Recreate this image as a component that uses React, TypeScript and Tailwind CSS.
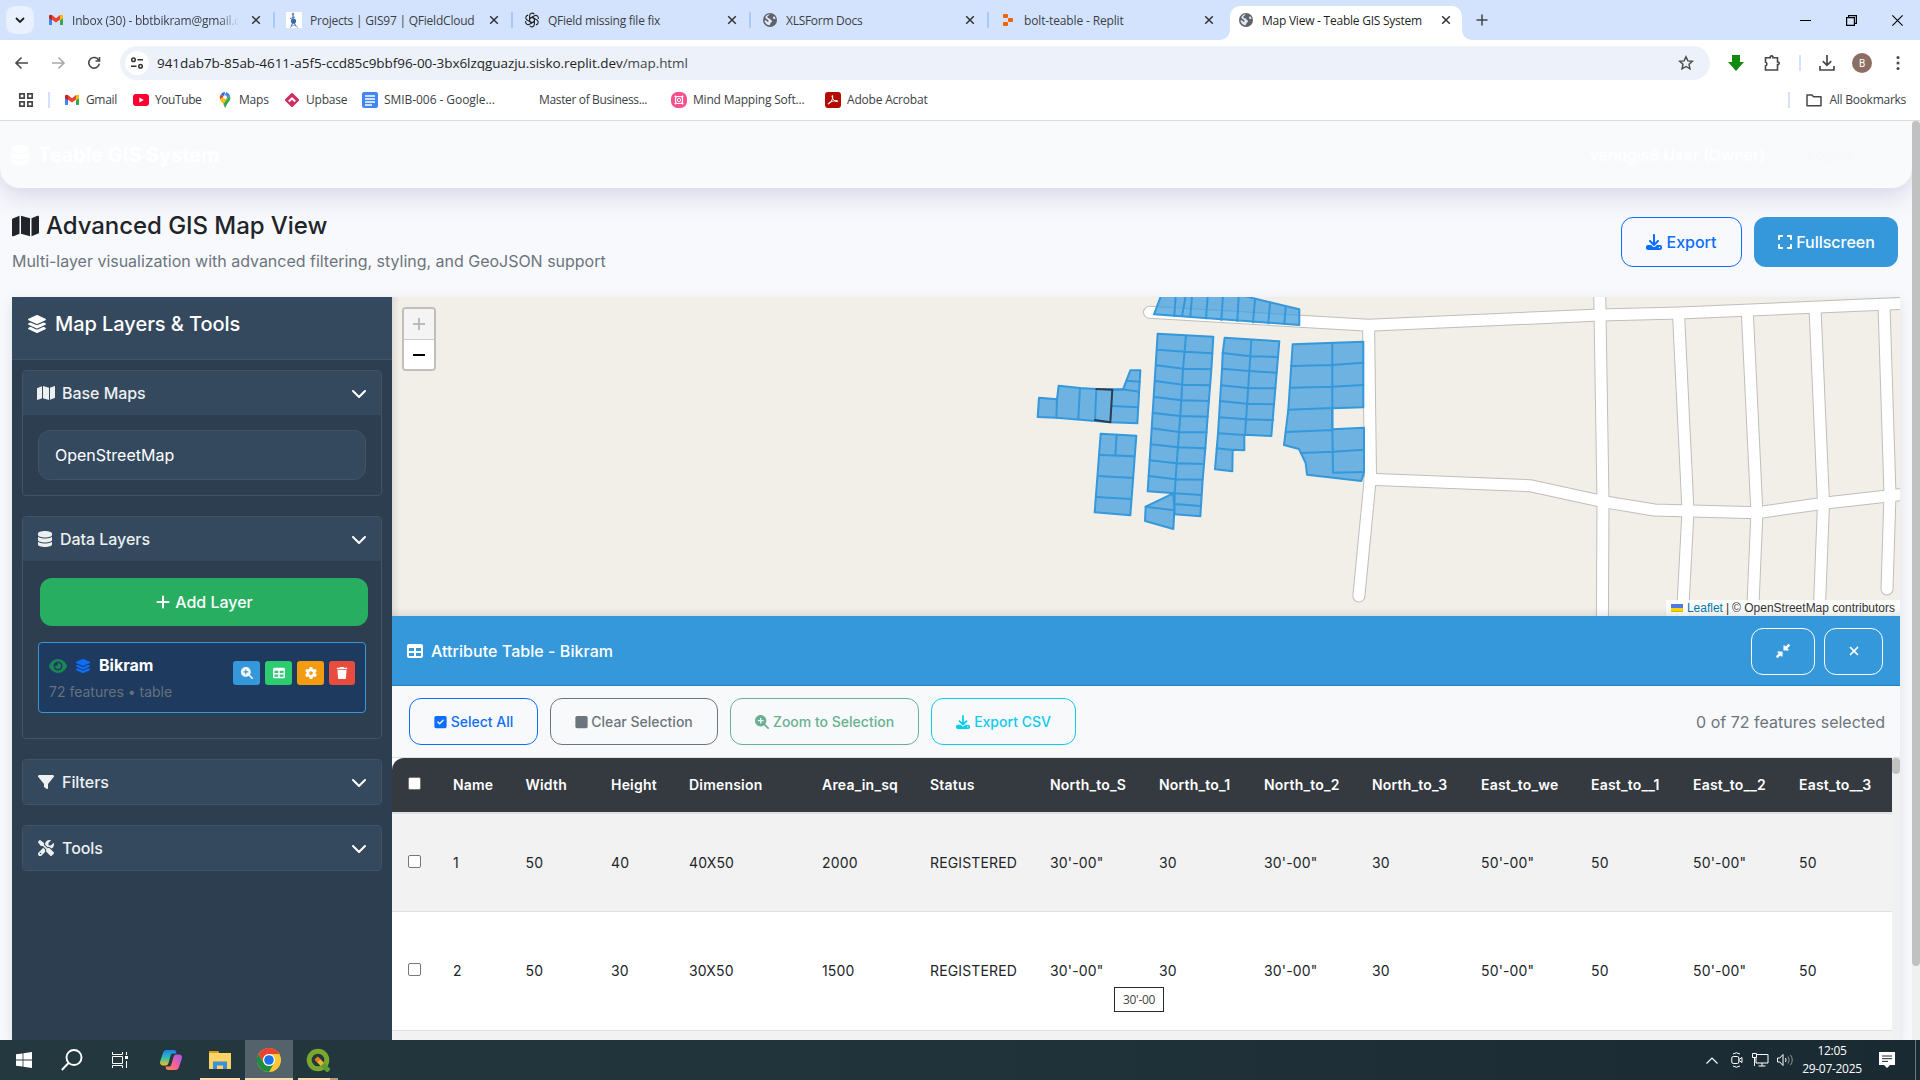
import type { ReactNode } from "react";
import {
  FaDatabase, FaMap, FaDownload, FaExpand, FaLayerGroup, FaChevronDown, FaPlus, FaEye, FaMagnifyingGlassPlus,
  FaTable, FaGear, FaTrash, FaFilter, FaScrewdriverWrench, FaSquareCheck, FaSquare, FaXmark,
  FaDownLeftAndUpRightToCenter,
} from "react-icons/fa6";

const ui = "font-['Open_Sans','Noto_Sans',sans-serif]";

/* ---------- small brand icons ---------- */
const Gmail = () => (
  <svg viewBox="0 0 16 16" className="size-4 shrink-0">
    <path d="M1 4v9h3V6z" fill="#4285f4" /><path d="M15 4v9h-3V6z" fill="#34a853" />
    <path d="M1 3.5 4 3l4 3.2L12 3l3 .5v2L8 10.5 1 5.500z" fill="#ea4335" />
    <path d="M12 3.200 14 2.700 15 4v2.200l-3 2.300z" fill="#fbbc04" /><path d="M4 3.200 2 2.700 1 4v2.200l3 2.300z" fill="#c5221f" />
  </svg>
);
const Field = () => (
  <svg viewBox="0 0 16 16" className="size-4 shrink-0">
    <path fill="#fff" d="M0 0h16v16H0z" /><circle cx="7" cy="2" r="1.300" fill="#7d8fa8" />
    <path d="M7 3v5M4 6.500 9 5M5 14l2-3M10 14 8 11" stroke="#5f83b5" strokeWidth="1.300" />
    <circle cx="7.500" cy="9" r="2.600" fill="#3469b0" /><path d="M4 15.500 8 13l4 2.500" stroke="#88a5cc" fill="none" />
  </svg>
);
const OpenAI = () => (
  <svg viewBox="0 0 16 16" className="size-4 shrink-0" fill="none" stroke="#222" strokeWidth="1.100">
    {[0, 60, 120, 180, 240, 300].map((a) => (
      <path key={a} transform={`rotate(${a} 8 8)`} d="M8 5.200 5.600 6.600V3.700a2.600 2.600 0 0 1 4.700-1.500M8 5.200l3 1.700" />
    ))}
  </svg>
);
const Globe = () => (
  <svg viewBox="0 0 16 16" className="size-4 shrink-0">
    <circle cx="8" cy="8" r="7" fill="#5f6368" />
    <path d="M8.500 2.200c-2 .3-1.500 1.600-3 2-.6 1.400.4 2 2 2.200 1.300.2.700 1.700 1.800 1.800 1.500.200.600 2-.6 2.500-.6.900-.4 2-1.200 2.600C4.500 13 2.600 10.700 2.500 8.300c1 .1 2 .2 2.600 1.200.5.700 1.400.4 1.500-.5C6.700 7.300 3.900 7.600 3.300 5.300 4.300 3.200 6.300 2 8.500 2.200zM12 4l1.700 2.500-1.700.8-1.200-1.500z" fill="#dfe9fb" />
  </svg>
);
const Replit = () => (
  <svg viewBox="0 0 16 16" className="size-4 shrink-0" fill="#f26207">
    <rect x="3" y="2" width="5" height="4" rx="1" /><rect x="8" y="6" width="5" height="4" rx="1" /><rect x="3" y="10" width="5" height="4" rx="1" />
  </svg>
);
const CloseX = () => (
  <svg viewBox="0 0 10 10" className="size-[10px] shrink-0" stroke="#333" strokeWidth="1.500"><path d="M1.200 1.200l7.600 7.600M8.800 1.200 1.200 8.800" /></svg>
);

/* ---------- browser chrome ---------- */
const tabs: { icon: ReactNode; title: string; cls: string }[] = [
  { icon: <Gmail />, title: "Inbox (30) - bbtbikram@gmail.c", cls: "tracking-[-0.2px] [mask-image:linear-gradient(90deg,#000_88%,transparent)]" },
  { icon: <Field />, title: "Projects | GIS97 | QFieldCloud", cls: "tracking-[-0.22px]" },
  { icon: <OpenAI />, title: "QField missing file fix", cls: "tracking-[-0.24px]" },
  { icon: <Globe />, title: "XLSForm Docs", cls: "tracking-[-0.28px]" },
  { icon: <Replit />, title: "bolt-teable - Replit", cls: "tracking-[-0.14px]" },
];

function TabStrip() {
  return (
    <div className="flex h-10 w-full bg-[#d3e3fd]">
      <div className="flex h-10 w-[37px] shrink-0 items-center pl-[6px]">
        <div className="flex h-7 w-7 items-center justify-center rounded-[9px] bg-[#e9f1fe]">
          <svg viewBox="0 0 10 10" className="size-[10px]" fill="none" stroke="#1f1f1f" strokeWidth="1.800"><path d="M1 3l4 4 4-4" /></svg>
        </div>
      </div>
      {tabs.map((t, i) => (
        <div key={t.title} className="flex h-10 w-[238px] shrink-0 items-center pl-[11px]">
          {t.icon}
          <span className={`mt-px ml-2 w-[168px] overflow-hidden text-[12px] whitespace-nowrap text-[#3b3f45] ${ui} ${t.cls}`}>{t.title}</span>
          <span className="ml-3 flex"><CloseX /></span>
          {i < 4 && <span className="ml-3 h-4 w-[2px] rounded bg-[#a8c7fa]" />}
        </div>
      ))}
      <div className="flex h-10 shrink-0 items-end">
        <svg viewBox="0 0 10 10" className="-ml-[7px] size-[10px]"><path d="M10 0v10H0A10 10 0 0 0 10 0z" fill="#fff" /></svg>
        <div className="flex h-[34px] w-[232px] items-center rounded-t-[10px] bg-white pb-[6px] pl-[8px]">
          <Globe />
          <span className={`mt-px ml-2 w-[168px] text-[12px] tracking-[-0.24px] whitespace-nowrap text-[#1f1f1f] ${ui}`}>Map View - Teable GIS System</span>
          <span className="ml-[11px] flex"><CloseX /></span>
        </div>
        <svg viewBox="0 0 10 10" className="size-[10px]"><path d="M0 0v10h10A10 10 0 0 1 0 0z" fill="#fff" /></svg>
      </div>
      <div className="flex h-10 flex-1 items-center justify-between pr-[17px] pl-[4px]">
        <svg viewBox="0 0 12 12" className="size-3" stroke="#444" strokeWidth="1.500"><path d="M6 .5v11M.5 6h11" /></svg>
        <div className="flex items-center gap-[35px]">
          <svg viewBox="0 0 11 11" className="size-[11px]" stroke="#000"><path d="M0 5.500h11" /></svg>
          <svg viewBox="0 0 11 11" className="size-[11px]" stroke="#000" strokeWidth="1.200" fill="none"><path d="M.6 2.600h7.800v7.800H.6zM2.600 2.600V.6h7.800v7.800h-2" /></svg>
          <svg viewBox="0 0 11 11" className="size-[11px]" stroke="#000" strokeWidth="1.100"><path d="M.4.4l10.200 10.200M10.600.4.4 10.600" /></svg>
        </div>
      </div>
    </div>
  );
}

function Toolbar() {
  return (
    <div className="flex h-[46px] w-full items-center bg-white">
      <div className="flex w-[120px] shrink-0 items-center gap-[20px] pl-[14px]">
        <svg viewBox="0 0 16 16" className="size-4" fill="none" stroke="#474747" strokeWidth="1.600"><path d="M14 8H2.500M7.500 2.500 2 8l5.500 5.500" /></svg>
        <svg viewBox="0 0 16 16" className="size-4" fill="none" stroke="#a9a9a9" strokeWidth="1.600"><path d="M2 8h11.500M8.500 2.500 14 8l-5.500 5.500" /></svg>
        <svg viewBox="0 0 16 16" className="size-4" fill="none" stroke="#474747" strokeWidth="1.600"><path d="M12.800 5.400A5.300 5.300 0 1 0 13.300 8.600" /><path d="M13.500 2v4H9.500" /></svg>
      </div>
      <div className="flex h-[34px] w-[1590px] shrink-0 items-center rounded-full bg-[#ecf1fa] pr-4 pl-[5px]">
        <div className="flex size-6 items-center justify-center rounded-full bg-white">
          <svg viewBox="0 0 14 14" className="size-[14px]" fill="none" stroke="#333" strokeWidth="1.500"><circle cx="3.500" cy="3.800" r="1.800" /><path d="M7.500 3.800H13M1 10.200h5.500" /><circle cx="10.500" cy="10.200" r="1.800" /></svg>
        </div>
        <span className={`ml-2 flex-1 text-[13.5px] tracking-[-0.05px] whitespace-nowrap text-[#1f1f1f] ${ui}`}>
          941dab7b-85ab-4611-a5f5-ccd85c9bbf96-00-3bx6lzqguazju.sisko.replit.dev<span className="text-[#474747]">/map.html</span>
        </span>
        <svg viewBox="0 0 16 16" className="size-4" fill="none" stroke="#474747" strokeWidth="1.400"><path d="M8 1.700l1.900 4.200 4.500.4-3.400 3 1 4.500L8 11.500l-4 2.300 1-4.500-3.400-3 4.500-.4z" /></svg>
      </div>
      <div className="flex flex-1 items-center pl-[17px]">
        <svg viewBox="0 0 18 18" className="size-[18px]"><path d="M5 1h8v7h4l-8 9-8-9h4z" fill="#0f8a0f" /></svg>
        <svg viewBox="0 0 18 18" className="ml-[18px] size-[18px]" fill="none" stroke="#474747" strokeWidth="1.600"><path d="M2.500 3.800H7.300V2.600a1.500 1.500 0 0 1 2.600 0V3.800h4.600V8h.8a1.400 1.400 0 0 1 0 2.600h-.8V16h-12v-4.200a2 2 0 0 0 0-3.800z" /></svg>
        <span className="ml-[18px] h-4 w-[2px] bg-[#d3e3fd]" />
        <svg viewBox="0 0 16 16" className="ml-[18px] size-4" fill="none" stroke="#474747" strokeWidth="1.700"><path d="M8 0v10M3.800 6.200 8 10.400l4.200-4.200M1 11v4h14v-4" /></svg>
        <span className="ml-[17px] flex size-5 items-center justify-center rounded-full bg-[#8d6e63] font-['Roboto',sans-serif] text-[10px] text-white">B</span>
        <svg viewBox="0 0 4 16" className="ml-[24px] h-4 w-1" fill="#474747"><circle cx="2" cy="2.500" r="1.500" /><circle cx="2" cy="8" r="1.500" /><circle cx="2" cy="13.500" r="1.500" /></svg>
      </div>
    </div>
  );
}

function Bookmark({ icon, label, w, t = "tracking-[-0.2px]" }: { icon: ReactNode; label: string; w: string; t?: string }) {
  return (
    <div className={`flex shrink-0 items-center ${w}`}>
      <span className="flex size-4 shrink-0 items-center">{icon}</span>
      <span className={`ml-[6px] text-[12px] whitespace-nowrap text-[#3b3f45] ${t} ${ui}`}>{label}</span>
    </div>
  );
}

function Bookmarks() {
  return (
    <div className="flex h-[35px] w-full items-start border-b border-[#dcdcdc] bg-white">
      <div className="flex h-7 w-full items-center pl-[18px]">
        <svg viewBox="0 0 16 16" className="size-4 shrink-0" fill="none" stroke="#474747" strokeWidth="1.700"><path d="M1.800 1.800h4.400v4.400H1.800zM9.800 1.800h4.400v4.400H9.800zM1.800 9.800h4.400v4.400H1.800zM9.800 9.800h4.400v4.400H9.800z" /></svg>
        <span className="mr-[14px] ml-[14px] h-4 w-[2px] bg-[#d3e3fd]" />
        <Bookmark w="w-[69px]" t="tracking-[-0.35px]" label="Gmail" icon={<Gmail />} />
        <Bookmark w="w-[84px]" t="tracking-[-0.42px]" label="YouTube" icon={<svg viewBox="0 0 16 16"><rect y="2" width="16" height="12" rx="3" fill="#f03" /><path d="M6.300 5.500v5L10.800 8z" fill="#fff" /></svg>} />
        <Bookmark w="w-[67px]" label="Maps" icon={
          <svg viewBox="0 0 16 16"><path d="M8 0a5.300 5.300 0 0 0-4 2l3 3z" fill="#1a73e8" /><path d="M4 2a5.500 5.500 0 0 0-.8 5.500L7 4.800z" fill="#ea4335" /><path d="M3.200 7.500C3.700 9 5.200 10.600 6.300 12l5.500-6.700-1.600-2.700z" fill="#fbbc04" /><path d="M12.900 3.500c1 2.300.4 4.200-.9 6-1.600 2-2.700 3.200-3.300 6h-1c-.3-1.500-.8-2.600-1.400-3.500z" fill="#34a853" /><path d="M8 0c2.200 0 4 1.200 4.900 3.500L9.600 7 6.800 4.800 9.200.2z" fill="#4285f4" /><circle cx="8" cy="5.200" r="1.900" fill="#fff" /></svg>} />
        <Bookmark w="w-[78px]" label="Upbase" icon={<svg viewBox="0 0 16 16"><rect x="2.600" y="2.600" width="10.800" height="10.800" rx="1.500" transform="rotate(45 8 8)" fill="#cf2e63" /><path d="M4.800 9.500 8 6.300l3.200 3.200" fill="none" stroke="#fff" strokeWidth="1.900" /></svg>} />
        <Bookmark w="w-[155px]" t="tracking-[-0.06px]" label="SMIB-006 - Google..." icon={<svg viewBox="0 0 16 16"><rect width="16" height="16" rx="2" fill="#4285f4" /><path d="M3 4h10M3 7h10M3 10h10M3 13h7" stroke="#fff" strokeWidth="1.500" /></svg>} />
        <Bookmark w="w-[154px]" t="tracking-[-0.35px]" label="Master of Business..." icon={null} />
        <Bookmark w="w-[154px]" label="Mind Mapping Soft..." icon={<svg viewBox="0 0 16 16"><rect width="16" height="16" rx="6.500" fill="#f64f8b" /><rect x="4.500" y="4.500" width="7" height="7" rx="2" fill="none" stroke="#fff" strokeWidth="1.200" /><circle cx="8" cy="8" r="1.700" fill="none" stroke="#fff" /><path d="M3.800 3.800l1.500 1.500M12.200 3.800l-1.500 1.500M3.800 12.200l1.500-1.500M12.200 12.200l-1.500-1.500" stroke="#fff" strokeWidth="1.600" /></svg>} />
        <Bookmark w="w-[120px]" label="Adobe Acrobat" icon={<svg viewBox="0 0 16 16"><rect width="16" height="16" rx="3" fill="#b30b00" /><path d="M3.500 12c2-1 4.500-4.500 4.300-8 0-.8-1-.8-.8.4.5 2.600 2.500 5.400 5.300 5.300.8-.1.800-1-.3-1.100-2.500-.1-6 .9-8.500 2.600-.6.500-.4 1.300 0 .8z" fill="none" stroke="#fff" /></svg>} />
        <div className="ml-auto flex items-center pr-[14px]">
          <span className="h-4 w-[2px] bg-[#d3e3fd]" />
          <svg viewBox="0 0 16 16" className="ml-4 size-4" fill="none" stroke="#474747" strokeWidth="1.500"><path d="M1 3h5l1.500 1.700H15v9H1z" strokeLinejoin="round" /></svg>
          <span className={`ml-2 text-[12px] tracking-[-0.27px] whitespace-nowrap text-[#3b3f45] ${ui}`}>All Bookmarks</span>
        </div>
      </div>
    </div>
  );
}

/* ---------- map ---------- */
const roads = [
  "M1368.600 326L1370.500 476L1358.900 596",
  "M1599.800 285V300L1603 500L1602.300 640",
  "M1678.500 314L1688 511L1683.300 600L1683 640",
  "M1747.300 312L1756.900 512.700L1753.200 600L1752 640",
  "M1815 308L1823.500 503.300L1819.400 608",
  "M1884 305L1890 494.700L1887 589",
  "M1149.500 312.300L1368.500 325.300L1599.700 315L1680 313L1910 303",
  "M1370 479.300L1529.800 485.700L1603.400 501.700L1654.400 510L1756.900 512.700L1823.500 503.300L1910 493.500",
];
const parcels = [
  "425,12 402,73 838,105 838,58 700,25 640,8",
  "413,131 580,140 574,240 563,380 556,475 548,570 541,679 463,673 464,610 383,604 386,558",
  "460,610 377,650 375,693 460,717 463,661",
  "614,143 778,154 754,438 673,434 673,481 638,479 637,544 585,538 594,430 606,237 608,190",
  "818,163 1030,155 1030,352 937,355 937,418 1032,413 1032,546 1024,573 861,554 857,519 837,477 792,465 805,358",
  "57,323 111,328 116,287 180,294 229,297 309,298 331,241 361,241 352,400 271,397 109,383 53,381",
  "242,431 349,437 331,676 224,667",
];
const parcelLines =
  "M467 18L463 78M497 18L486 78M516 18L511 80M563 18L558 85M609 18L604 90M656 18L652 93M705 28L699 97M750 38L745 100M797 52L793 102" +
  "M498 137L489 237L484 330L474 470L470 520L464 610" +
  "M411 179L495 185L577 190M408 226L490 236L573 238M406 273L488 284L569 286M403 321L485 331L566 333M399 369L480 378L563 380M396 415L477 426L560 427M392 463L475 472L556 475M389 511L470 520L551 522M386 558L467 568L547 569M464 610L544 615M464 642L542 648M377 650L462 661M462 610V661" +
  "M694 150L688 243L675 435M608 189L692 199L771 201M606 236L688 243L769 248M603 286L684 294L766 295M600 333L682 341L762 343M598 382L678 388L760 390M594 430L675 435M590 475L638 480" +
  "M937 159L937 355M937 418L939 548L1032 546M813 228L936 225L1030 218M811 293L936 290L1030 285M805 359L937 354M798 426L937 420M843 489L937 485L1032 479M937 355V418" +
  "M111 328L109 383M180 294L175 386M229 297L225 390M309 298L357 305M277 299L309 299M275 348L354 352M320 272L359 275" +
  "M240 495L342 499M236 558L339 564M230 621L334 627M290 434L286 495";

function MapView() {
  return (
    <div className="relative h-[319px] w-full shrink-0 overflow-hidden bg-[#f2efe9]">
      <svg viewBox="392 297 1508 319" className="block h-[319px] w-full" fill="none" strokeLinejoin="round" strokeLinecap="round">
        <g stroke="#c0bebb" strokeWidth="13">{roads.map((d) => <path key={d} d={d} />)}</g>
        <g stroke="#fff" strokeWidth="11">{roads.map((d) => <path key={d} d={d} />)}</g>
        <g transform="translate(1020 290) scale(.33333)" stroke="#3498db" strokeWidth="6">
          {parcels.map((p) => <polygon key={p} points={p} fill="#3498db" fillOpacity="0.7" />)}
          <path d={parcelLines} />
          <path d="M229 297L277 299L271 397L225 390" stroke="#2c3e50" />
        </g>
      </svg>
      <div className="absolute top-[10px] left-[10px] flex w-[34px] flex-col rounded-[4px] border-2 border-black/20 bg-clip-padding">
        <div className="flex h-[31px] items-center justify-center rounded-t-[2px] border-b border-[#ccc] bg-[#f4f4f4]"><svg viewBox="0 0 14 14" className="size-[14px]" stroke="#bbb" strokeWidth="2"><path d="M7 1v12M1 7h12" /></svg></div>
        <div className="flex h-[29px] items-center justify-center rounded-b-[2px] bg-white"><svg viewBox="0 0 14 14" className="size-[14px]" stroke="#000" strokeWidth="2"><path d="M1 7h12" /></svg></div>
      </div>
      <div className="absolute right-0 bottom-0 flex h-4 items-center bg-white/80 pr-[5px] pl-[5px] font-['Liberation_Sans',Arial,sans-serif] text-[12px] whitespace-nowrap text-[#333]">
        <svg viewBox="0 0 12 8" className="mr-1 h-2 w-3"><path fill="#4c7be1" d="M0 0h12v4H0z" /><path fill="#ffd500" d="M0 4h12v3H0z" /><path fill="#e0bc00" d="M0 7h12v1H0z" /></svg>
        <span className="text-[#0078a8]">Leaflet</span><span className="mx-[3px]">|</span><span>© OpenStreetMap contributors</span>
      </div>
      <div className="absolute inset-x-0 bottom-0 h-2 bg-linear-to-t from-black/8 to-transparent" />
      <div className="absolute inset-y-0 left-0 w-2 bg-linear-to-r from-black/8 to-transparent" />
    </div>
  );
}

/* ---------- sidebar ---------- */
function SectionHead({ icon, title }: { icon: ReactNode; title: string }) {
  return (
    <div className="flex h-[44px] shrink-0 items-center rounded-t-[3px] bg-[#34495e] pr-[14px] pl-[14px] text-base text-[#ecf0f1]">
      {icon}
      <span className="flex-1 pl-[7px] font-medium tracking-[-0.05px]">{title}</span>
      <FaChevronDown className="size-4 text-white" />
    </div>
  );
}

const section = "rounded-[4px] border border-[#415466]";

function Sidebar() {
  return (
    <aside className="flex w-[380px] shrink-0 flex-col bg-[#2c3e50] text-white">
      <div className="flex h-[63px] shrink-0 items-start border-b border-[#415466] bg-[#34495e] px-[15px] pt-3">
        <FaLayerGroup className="mt-[5px] size-5" />
        <h2 className="pl-2 text-[20px] leading-[30px] font-medium tracking-[-0.05px]">Map Layers &amp; Tools</h2>
      </div>
      <div className="flex flex-col px-[10px] pt-[10px]">
        <section className={`mb-[20px] h-[126px] ${section}`}>
          <SectionHead icon={<FaMap className="h-4 w-[18px]" />} title="Base Maps" />
          <div className="px-[15px] pt-[15px]">
            <div className="flex h-[50px] items-center rounded-[12px] border border-[#415466] bg-[#34495e] px-4 text-base">OpenStreetMap</div>
          </div>
        </section>
        <section className={`mb-[20px] h-[223px] ${section}`}>
          <SectionHead icon={<FaDatabase className="size-4" />} title="Data Layers" />
          <div className="px-[15px] pt-[17px]">
            <div className="ml-[2px] flex h-[48px] w-[328px] items-center justify-center rounded-[12px] bg-[#27ae60] text-base font-medium">
              <FaPlus className="mr-1 size-4" />Add Layer
            </div>
            <div className="mt-4 flex h-[71px] w-[328px] items-start rounded-[4px] border border-[#3498db] bg-[#1e3a5f] px-[10px] pt-[9px]">
              <div className="flex-1">
                <div className="flex items-center text-base leading-[27px] font-bold">
                  <FaEye className="h-4 w-[18px] text-[#198754]" />
                  <FaLayerGroup className="mr-2 ml-2 size-4 text-[#0d6efd]" />Bikram
                </div>
                <div className="-mt-px text-[14px] leading-[27px] text-[#66717c]">72 features • table</div>
              </div>
              <div className="flex gap-[5px] pt-[9px]">
                <span className="flex h-6 w-[27px] items-center justify-center rounded-[3px] bg-[#3498db]"><FaMagnifyingGlassPlus className="size-3" /></span>
                <span className="flex h-6 w-[27px] items-center justify-center rounded-[3px] bg-[#2ecc71]"><FaTable className="size-3" /></span>
                <span className="flex h-6 w-[27px] items-center justify-center rounded-[3px] bg-[#f39c12]"><FaGear className="size-3" /></span>
                <span className="flex h-6 w-[26px] items-center justify-center rounded-[3px] bg-[#e74c3c]"><FaTrash className="size-3" /></span>
              </div>
            </div>
          </div>
        </section>
        <section className={`mb-[20px] h-[46px] ${section}`}>
          <SectionHead icon={<FaFilter className="h-4 w-[18px]" />} title="Filters" />
        </section>
        <section className={`h-[46px] ${section}`}>
          <SectionHead icon={<FaScrewdriverWrench className="h-4 w-[18px]" />} title="Tools" />
        </section>
      </div>
    </aside>
  );
}

/* ---------- attribute table ---------- */
const grid =
  "grid grid-cols-[61px_72.5px_85.5px_78px_133px_108px_120px_109px_105px_108px_109px_110px_102px_106px_93px] items-center";
const heads = ["Name", "Width", "Height", "Dimension", "Area_in_sq", "Status", "North_to_S", "North_to_1", "North_to_2", "North_to_3", "East_to_we", "East_to__1", "East_to__2", "East_to__3"];
const rows = [
  ["1", "50", "40", "40X50", "2000", "REGISTERED", "30'-00\"", "30", "30'-00\"", "30", "50'-00\"", "50", "50'-00\"", "50"],
  ["2", "50", "30", "30X50", "1500", "REGISTERED", "30'-00\"", "30", "30'-00\"", "30", "50'-00\"", "50", "50'-00\"", "50"],
];
const Check = ({ cls }: { cls: string }) => <span className={`ml-4 size-[13px] rounded-[2px] border border-[#767676] bg-white ${cls}`} />;

function AttributeTable() {
  return (
    <div className="flex flex-1 flex-col overflow-hidden bg-[#f1f1f1]">
      <div className="flex h-[70px] shrink-0 items-center border-b border-[#2980b9] bg-[#3498db] pt-px pr-[17px] pl-[15px] text-white">
        <FaTable className="size-4" />
        <span className="flex-1 pl-2 text-base font-medium tracking-[0.05px]">Attribute Table - Bikram</span>
        <span className="mr-[9px] flex h-[47px] w-16 items-center justify-center rounded-[12px] border border-white"><FaDownLeftAndUpRightToCenter className="size-[14px]" /></span>
        <span className="flex h-[47px] w-[59px] items-center justify-center rounded-[12px] border border-white"><FaXmark className="size-[14px]" /></span>
      </div>
      <div className="flex h-[72px] shrink-0 items-center border-b border-[#dee2e6] bg-[#f8f9fa] pr-[15px] pl-[17px] text-[14px] font-medium">
        <span className="mr-3 flex h-[47px] w-[129px] items-center justify-center rounded-[12px] border border-[#0d6efd] text-[#0d6efd]"><FaSquareCheck className="mr-1 h-[14px] w-[13px]" />Select All</span>
        <span className="mr-3 flex h-[47px] w-[168px] items-center justify-center rounded-[12px] border border-[#6c757d] text-[#6c757d]"><FaSquare className="mr-[3px] h-[14px] w-[13px]" />Clear Selection</span>
        <span className="mr-3 flex h-[47px] w-[189px] items-center justify-center rounded-[12px] border border-[#68b18f] text-[#68b18f]"><FaMagnifyingGlassPlus className="mr-1 size-[14px]" />Zoom to Selection</span>
        <span className="flex h-[47px] w-[145px] items-center justify-center rounded-[12px] border border-[#0dcaf0] text-[#0dcaf0]"><FaDownload className="mr-1 size-[14px]" />Export CSV</span>
        <span className="ml-auto text-base font-normal text-[#6c757d]">0 of 72 features selected</span>
      </div>
      <div className="flex flex-1">
        <div className="w-[1500px] shrink-0 overflow-hidden bg-white">
          <div className={`h-[54px] w-[1500px] overflow-hidden rounded-tl-[12px] bg-[#343a40] pb-px text-[14px] font-semibold tracking-[0.2px] text-white ${grid}`}>
            <Check cls="-mt-[2px]" />
            {heads.map((h) => <span key={h} className="whitespace-nowrap">{h}</span>)}
          </div>
          <div className={`h-[100px] border-t-2 border-b border-[#dee2e6] bg-[#f2f2f2] text-[14px] text-[#212529] ${grid}`}>
            <Check cls="-mt-[3px]" />
            {rows[0].map((c, i) => <span key={i} className="tracking-[0.15px]">{c}</span>)}
          </div>
          <div className={`h-[119px] border-b border-[#dee2e6] bg-white pb-px text-[14px] text-[#212529] ${grid}`}>
            <Check cls="-mt-[2px]" />
            {rows[1].map((c, i) => <span key={i} className="tracking-[0.15px]">{c}</span>)}
          </div>
          <div className="h-4 bg-[#f2f2f2]" />
        </div>
        <div className="w-2 bg-[#f1f1f1]"><div className="h-4 w-2 rounded-full bg-[#c1c1c1]" /></div>
      </div>
    </div>
  );
}

/* ---------- taskbar ---------- */
function Taskbar() {
  return (
    <div className="flex h-10 w-full items-center bg-linear-to-r from-[#243840] via-[#20323a] to-[#1a2a32] text-white">
      <span className="flex w-12 justify-center"><svg viewBox="0 0 16 16" className="size-4" fill="#fff"><path d="M0 2.300 6.600 1.400v6.200H0zM7.400 1.300 16 0v7.600H7.400zM0 8.400h6.600v6.200L0 13.700zM7.400 8.400H16V16l-8.600-1.300z" /></svg></span>
      <span className="flex w-12 justify-center"><svg viewBox="0 0 22 22" className="size-[22px]" fill="none" stroke="#fff" strokeWidth="1.900"><circle cx="13" cy="8.500" r="7.500" /><path d="M7.500 14 .8 21" /></svg></span>
      <span className="flex w-12 justify-center"><svg viewBox="0 0 16 16" className="size-4" fill="none" stroke="#fff"><path d="M.5 4.500h10v7H.5zM.5 0v2.500h10V0M.5 16v-2.500h10V16M14.500 0v3M14.500 9v7" /><path d="M13 4h3v3h-3z" fill="#fff" stroke="none" /></svg></span>
      <span className="flex w-[54px] justify-center">
        <svg viewBox="0 0 22 20" className="h-5 w-[22px]">
          <defs>
            <linearGradient id="ca" x1="0" y1="0" x2="0" y2="1"><stop stopColor="#1c7ff0" /><stop offset=".5" stopColor="#30bdb0" /><stop offset="1" stopColor="#f3c11d" /></linearGradient>
            <linearGradient id="cb" x1="1" y1="0" x2="0" y2="1"><stop stopColor="#a05cf0" /><stop offset=".5" stopColor="#ee5fa0" /><stop offset="1" stopColor="#ff8a4c" /></linearGradient>
          </defs>
          <path d="M6.500 0H14c1.500 0 2 1 2.500 3.500h-3.500c-1.500 0-2 .8-2.500 2.500L8.500 13c-.5 1.700-1.500 2.500-3 2.500H3c-2.500 0-3.500-2-2.700-4.500L3 3C3.600 1 4.800 0 6.500 0z" fill="url(#ca)" />
          <path d="M15.500 20H8c-1.500 0-2-1-2.500-3.500H9c1.500 0 2-.8 2.500-2.500L13.500 7c.5-1.700 1.500-2.500 3-2.500H19c2.500 0 3.500 2 2.700 4.500L19 17c-.6 2-1.800 3-3.500 3z" fill="url(#cb)" />
        </svg>
      </span>
      <span className="relative flex h-10 w-[44px] items-center justify-center">
        <svg viewBox="0 0 22 18" className="h-[18px] w-[22px]"><path d="M0 0h9l1 2h12v16H0z" fill="#fdd463" /><path d="M0 0h9l1 2H0z" fill="#dc9a1b" /><path d="M4 18v-7.500h14V18h-4v-3.500H8V18z" fill="#3b8fdb" /></svg>
        <span className="absolute bottom-0 left-[2px] h-[2px] w-10 bg-[#fddcae]" />
      </span>
      <span className="relative ml-[3px] flex h-10 w-12 items-center justify-center bg-[#54626b]">
        <svg viewBox="0 0 24 24" className="size-6"><circle cx="12" cy="12" r="12" fill="#fcc934" /><path d="M1.600 6A12 12 0 0 0 12 24l5.200-9a6 6 0 0 1-10.400 0z" fill="#1e8e3e" /><path d="M1.600 6A12 12 0 0 1 22.400 6H12a6 6 0 0 0-5.200 9z" fill="#ea4335" /><circle cx="12" cy="12" r="6" fill="#fff" /><circle cx="12" cy="12" r="4.800" fill="#1a73e8" /></svg>
        <span className="absolute bottom-0 left-0 h-[2px] w-12 bg-[#fddcae]" />
      </span>
      <span className="relative flex h-10 w-[50px] items-center justify-center">
        <svg viewBox="0 0 24 24" className="size-6"><circle cx="12" cy="12" r="8.800" fill="none" stroke="#79a82c" strokeWidth="5" /><path d="M12 12l11 11" stroke="#5b9a35" strokeWidth="5" /><path d="M10.500 10.500l6 6" stroke="#f0b23c" strokeWidth="4" /><path d="M10 10l3 3" stroke="#ee7913" strokeWidth="4" /></svg>
        <span className="absolute bottom-0 left-[5px] h-[2px] w-8 bg-[#fddcae]" /><span className="absolute bottom-0 left-[37px] h-[2px] w-2 bg-[#b59c80]" />
      </span>
      <div className="ml-auto flex h-10 items-center">
        <svg viewBox="0 0 12 7" className="mr-[13px] h-[7px] w-3" fill="none" stroke="#fff" strokeWidth="1.200"><path d="M.5 6.500 6 1l5.500 5.500" /></svg>
        <svg viewBox="0 0 12 16" className="mr-[9px] h-4 w-3" fill="none" stroke="#fff"><rect x=".8" y="4.500" width="7" height="7" rx="1.500" /><path d="M8 7.500l3-2v5l-3-2M2 2Q5.500-.5 9 2M2 14q3.500 2.500 7 0" /></svg>
        <svg viewBox="0 0 17 14" className="mr-[8px] h-[14px] w-[17px]" fill="none" stroke="#fff"><path d="M5 1.500h11v8.500H4V5M10 10v3M6.500 13h7M.5.500h4v4h-4zM2.500 4.500V13" /></svg>
        <svg viewBox="0 0 17 14" className="mr-[7px] h-[14px] w-[17px]" fill="none" stroke="#fff"><path d="M.5 5v4h2.300L6 12.500v-11L2.800 5z" /><path d="M8.500 5q1.200 2 0 4" /><path d="M11 3.500q2.500 3.500 0 7M13.500 2q3.500 5 0 10" stroke="#8b969c" /></svg>
        <div className={`flex w-[62px] flex-col items-center text-[12px] leading-[18px] tracking-[-0.3px] ${ui}`}><span>12:05</span><span>29-07-2025</span></div>
        <svg viewBox="0 0 16 16" className="mr-[20px] ml-[16px] size-4"><path d="M0 0h16v13h-5l-3 3-3-3H0z" fill="#fff" /><path d="M3 4h10M3 6.700h10M3 9.400h6" stroke="#1b2b33" /></svg>
        <span className="mr-1 h-10 w-px bg-[#6d787e]" />
      </div>
    </div>
  );
}

export default function App() {
  return (
    <div className="relative flex h-[1080px] w-[1920px] flex-col overflow-hidden bg-white font-['Inter',sans-serif]">
      <TabStrip />
      <Toolbar />
      <Bookmarks />
      <div className="flex h-[919px] w-full shrink-0 overflow-hidden">
        <div className="flex w-[1912px] shrink-0 flex-col bg-[#f8f9fc]">
          <nav className="flex h-[67px] shrink-0 items-center justify-between rounded-b-[20px] bg-[#f9fafc] pr-[36px] pl-[10px] shadow-[0_6px_28px_rgba(60,50,140,0.2)]">
            <span className="flex items-center text-[20px] font-bold tracking-[-0.05px] text-white"><FaDatabase className="mr-2 size-5" />Teable GIS System</span>
            <span className="flex items-center gap-[43px] text-base text-white"><span className="font-medium tracking-[-0.1px]">venugis8 User (Owner)</span><span className="w-[68px] text-[14px] text-[#f6f8fa]">Logout</span></span>
          </nav>
          <header className="flex h-[109px] shrink-0 justify-between pr-[14px] pl-3">
            <div className="flex flex-col pt-[20px]">
              <h1 className="flex items-center text-[24px] leading-[36px] font-medium tracking-[-0.06px] text-[#212529]"><FaMap className="mr-[7px] h-6 w-[27px]" />Advanced GIS Map View</h1>
              <p className="mt-[5px] text-base leading-6 tracking-[-0.02px] text-[#6c757d]">Multi-layer visualization with advanced filtering, styling, and GeoJSON support</p>
            </div>
            <div className="flex gap-3 pt-[29px] text-base font-medium">
              <span className="flex h-[50px] w-[121px] items-center justify-center rounded-[12px] border border-[#0d6efd] text-[#0d6efd]"><FaDownload className="mr-1 size-4" />Export</span>
              <span className="flex h-[50px] w-[144px] items-center justify-center rounded-[12px] bg-[#3498db] text-white"><FaExpand className="mr-[3px] size-4" />Fullscreen</span>
            </div>
          </header>
          <main className="ml-3 flex h-[743px] w-[1888px] shrink-0 shadow-[0_4px_12px_rgba(0,0,0,0.1)]">
            <Sidebar />
            <div className="flex w-[1508px] flex-col">
              <MapView />
              <AttributeTable />
            </div>
          </main>
        </div>
        <div className="w-2 bg-[#f0f0f0]"><div className="h-[845px] w-2 rounded-full bg-[#c1c1c1]" /></div>
      </div>
      <Taskbar />
      <div className={`absolute top-[987px] left-[1114px] flex h-[25px] w-[50px] items-center justify-center border border-[#2b2b2b] bg-white text-[12px] tracking-[-0.3px] text-[#444] ${ui}`}>30'-00</div>
    </div>
  );
}
